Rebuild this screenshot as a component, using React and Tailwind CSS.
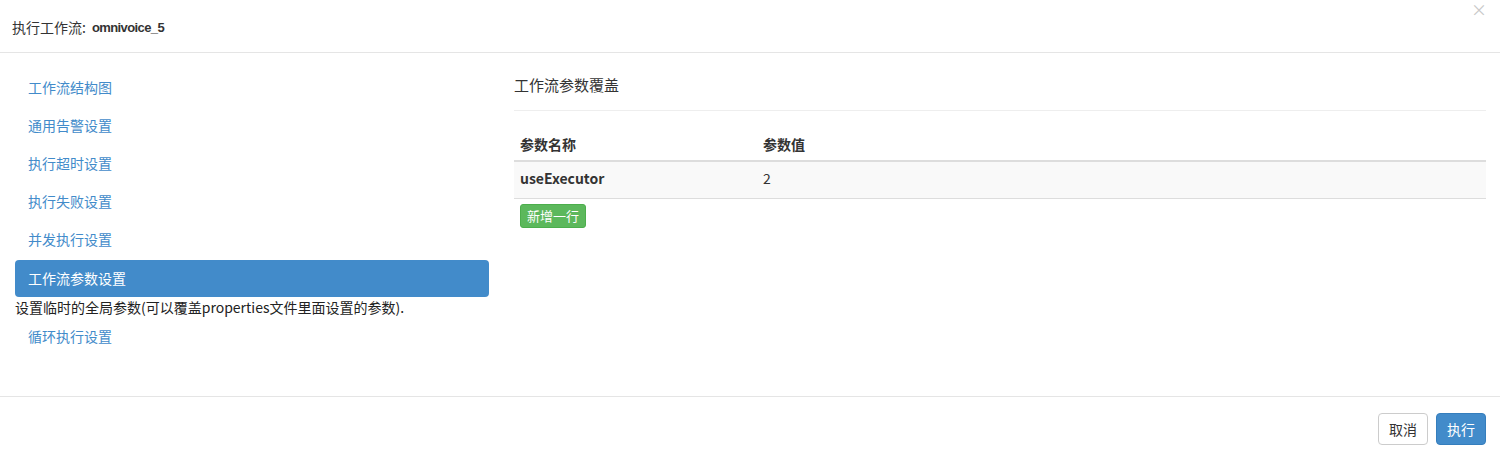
import React from "react";

const navItems = [
  "工作流结构图",
  "通用告警设置",
  "执行超时设置",
  "执行失败设置",
  "并发执行设置",
];

const font = {
  fontFamily: '"Noto Sans CJK SC", "Noto Sans", sans-serif',
};

const App = () => {
  return (
    <div className="w-[1500px] h-[457px] bg-white text-[#333] text-[14px] flex flex-col" style={font}>
      {/* Header */}
      <div className="relative h-[53px] border-b border-[#e5e5e5] flex items-center pl-[12px] pt-[2px]">
        <span className="text-[14px] leading-none">执行工作流:</span>
        <span className="ml-[6px] text-[13px] font-bold tracking-[-0.6px] leading-none" style={{ fontFamily: '"Liberation Sans", Arial, sans-serif' }}>
          omnivoice_5
        </span>
        <button className="absolute right-[13px] top-[1px] text-[16px] text-[#c8c8c8] leading-none">×</button>
      </div>

      {/* Body */}
      <div className="h-[343px] flex pt-[17px]">
        {/* Left nav */}
        <div className="ml-[15px] w-[474px] flex flex-col">
          {navItems.map((item) => (
            <div key={item} className="h-[37px] mb-[1px] pl-[13px] pb-[2px] flex items-center text-[#428bca] cursor-pointer">
              {item}
            </div>
          ))}
          <div className="h-[37px] rounded-[4px] bg-[#428bca] text-white pl-[13px] flex items-center">
            工作流参数设置
          </div>
          <div className="h-[21px] leading-[20px] text-[#222]">
            设置临时的全局参数(可以覆盖properties文件里面设置的参数).
          </div>
          <div className="h-[37px] pl-[13px] flex items-center text-[#428bca] cursor-pointer">
            循环执行设置
          </div>
        </div>

        {/* Right content */}
        <div className="ml-[25px] w-[972px] flex flex-col">
          <div className="h-[30px] flex items-center text-[15px]">工作流参数覆盖</div>
          <div className="mt-[10px] border-t border-[#eee]" />
          <table className="mt-[17px] w-full border-collapse">
            <thead>
              <tr className="border-b-2 border-[#ddd]">
                <th className="h-[33px] w-[243px] pl-[6px] text-left font-bold">参数名称</th>
                <th className="h-[33px] text-left font-bold pl-[6px]">参数值</th>
              </tr>
            </thead>
            <tbody>
              <tr className="bg-[#f9f9f9] border-b border-[#ddd]">
                <td className="h-[37px] pl-[6px] pb-[3px] font-bold">useExecutor</td>
                <td className="h-[37px] pl-[6px] pb-[3px]">2</td>
              </tr>
            </tbody>
          </table>
          <div className="mt-[5px] pl-[6px] flex">
            <button className="h-[24px] w-[66px] rounded-[3px] bg-[#5cb85c] border border-[#4cae4c] text-white text-[13px] leading-none">
              新增一行
            </button>
          </div>
        </div>
      </div>

      {/* Footer */}
      <div className="flex-1 border-t border-[#e5e5e5] flex justify-end items-start pt-[16px] pr-[14px] gap-[8px]">
        <button className="h-[32px] w-[50px] rounded-[4px] border border-[#ccc] bg-white text-[14px] text-[#333]">
          取消
        </button>
        <button className="h-[32px] w-[50px] rounded-[4px] border border-[#357ebd] bg-[#428bca] text-[14px] text-white">
          执行
        </button>
      </div>
    </div>
  );
};

export default App;
